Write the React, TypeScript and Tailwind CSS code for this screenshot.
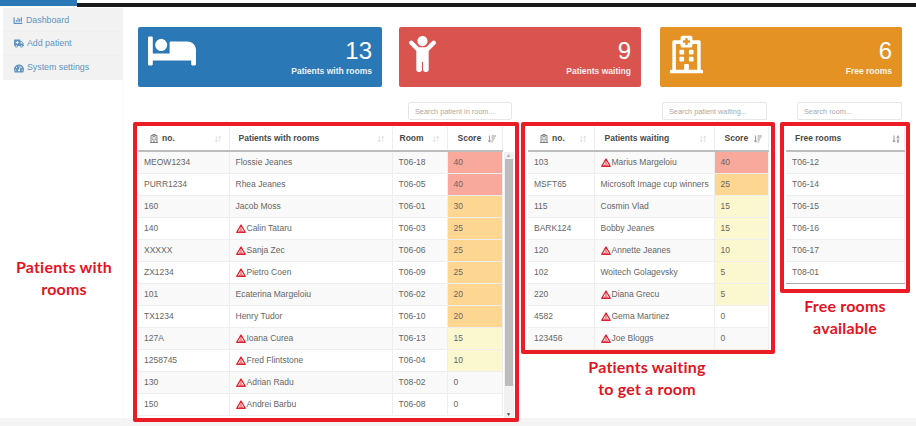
import React from "react";
import { FaBed, FaChild, FaRegHospital, FaAmbulance, FaTachometerAlt, FaSortAmountDown, FaSortAlphaDown, FaChartBar } from "react-icons/fa";
import { ArrowDownUp } from "lucide-react";

const Warn = () => (
  <svg viewBox="0 0 20 18" className="w-[10px] h-[9px] mr-px inline-block shrink-0" aria-hidden="true">
    <path d="M10 2 L18.5 16.5 H1.5 Z" fill="#fff" stroke="#e0202c" strokeWidth="2.6" strokeLinejoin="round" />
    <path d="M10 6.5 L10 12 M6.5 14 H13.5" stroke="#e0202c" strokeWidth="2" />
  </svg>
);

const Sort = () => <ArrowDownUp className="w-[8px] h-[8px] text-[#d8d8d8] shrink-0" strokeWidth={2} />;

function scoreClass(s: number) {
  if (s >= 40) return "bg-[#f9a99b]";
  if (s >= 20) return "bg-[#fdd692]";
  if (s >= 5) return "bg-[#fbf7cf]";
  return "";
}

type Row = [string, string, boolean, string, number];
const rooms: Row[] = [
  ["MEOW1234", "Flossie Jeanes", false, "T06-18", 40],
  ["PURR1234", "Rhea Jeanes", false, "T06-05", 40],
  ["160", "Jacob Moss", false, "T06-01", 30],
  ["140", "Calin Tataru", true, "T06-03", 25],
  ["XXXXX", "Sanja Zec", true, "T06-06", 25],
  ["ZX1234", "Pietro Coen", true, "T06-09", 25],
  ["101", "Ecaterina Margeloiu", false, "T06-02", 20],
  ["TX1234", "Henry Tudor", false, "T06-10", 20],
  ["127A", "Ioana Curea", true, "T06-13", 15],
  ["1258745", "Fred Flintstone", true, "T06-04", 10],
  ["130", "Adrian Radu", true, "T08-02", 0],
  ["150", "Andrei Barbu", true, "T06-08", 0],
];
const waiting: Row[] = [
  ["103", "Marius Margeloiu", true, "", 40],
  ["MSFT65", "Microsoft Image cup winners", false, "", 25],
  ["115", "Cosmin Vlad", false, "", 15],
  ["BARK124", "Bobby Jeanes", false, "", 15],
  ["120", "Annette Jeanes", true, "", 10],
  ["102", "Woitech Golagevsky", false, "", 5],
  ["220", "Diana Grecu", true, "", 5],
  ["4582", "Gema Martinez", true, "", 0],
  ["123456", "Joe Bloggs", true, "", 0],
];
const free = ["T06-12", "T06-14", "T06-15", "T06-16", "T06-17", "T08-01"];

const th = "h-6 border-r border-[#eeeeee] border-b-2 border-b-[#bdbdbd] font-bold text-[#4a4a4a] text-left p-0";
const td = "h-[22px] p-0 pl-[6px] border-r border-b border-[#eeeeee] whitespace-nowrap overflow-hidden";

function Name({ r }: { r: Row }) {
  return <span className="flex items-center">{r[2] && <Warn />}{r[1]}</span>;
}

function Head({ children, sort, className = "" }: { children: React.ReactNode; sort?: React.ReactNode; className?: string }) {
  return <div className={`flex items-center justify-between ${className}`}><span className="flex items-center gap-[4px]">{children}</span>{sort ?? <Sort />}</div>;
}

const No = () => <><FaRegHospital className="w-[8px] h-[9px] text-[#666]" /> no.</>;

function Card({ color, w, icon, n, label }: { color: string; w: string; icon: React.ReactNode; n: string; label: string }) {
  return (
    <div className={`${color} ${w} h-[60px] rounded-[2px] flex justify-between items-start pl-[10px] pr-[10px] text-white`}>
      <div className="pt-[9px]">{icon}</div>
      <div className="text-right pt-[10px]">
        <div className="text-[24px] leading-[27px]">{n}</div>
        <div className="text-[8.5px] leading-[12px] font-bold mt-[1px] opacity-90">{label}</div>
      </div>
    </div>
  );
}

function Search({ w, text, className = "" }: { w: string; text: string; className?: string }) {
  return <input readOnly placeholder={text} className={`${w} ${className} h-[18px] border border-[#e6e6e6] rounded-[2px] bg-white px-[6px] text-[7.3px] placeholder:text-[#aaaaaa] outline-none`} />;
}

const Label = ({ children, className = "" }: { children: React.ReactNode; className?: string }) => (
  <div className={`font-['Lato',sans-serif] font-bold text-[#e3141f] text-center text-[16px] leading-[22px] tracking-[0.2px] ${className}`}>{children}</div>
);

export default function App() {
  return (
    <div className="w-[916px] h-[426px] overflow-hidden bg-white font-['Liberation_Sans',sans-serif] text-[8.5px] text-[#666666] flex flex-col">
      <div className="h-[8px] shrink-0 flex items-start">
        <div className="w-[77px] h-[6px] bg-[#2b78b6]" />
        <div className="flex-1 h-[4px] mt-[3px] bg-[#1a1a1a]" />
      </div>
      <div className="flex flex-1 min-h-0">
        <div className="w-[123px] shrink-0 pl-[3px]">
          <nav className="h-[72px] bg-[#f2f2f2] text-[#5f93c0] text-[8.8px] flex flex-col">
            <div className="h-6 flex items-center gap-[3px] pl-[10px] pt-[2px] border-b border-[#efefef]"><FaChartBar className="w-[10px] h-[9px]" />Dashboard</div>
            <div className="h-6 flex items-center gap-[3px] pl-[11px] border-b border-[#efefef]"><FaAmbulance className="w-[10px] h-[9px]" />Add patient</div>
            <div className="h-6 flex items-center gap-[3px] pl-[11px]"><FaTachometerAlt className="w-[10px] h-[9px]" />System settings</div>
          </nav>
          <Label className="mt-[176px] -ml-[3px] w-[128px]">Patients with<br />rooms</Label>
        </div>
        <main className="flex-1 min-w-0 border-l border-[#fafafa]">
          <div className="flex pl-[14px] pt-[19px]">
            <Card color="bg-[#2b78b6]" w="w-[244px]" icon={<FaBed className="w-[48px] h-[42px] -mt-[6px]" />} n="13" label="Patients with rooms" />
            <Card color="bg-[#d9534f] ml-[17px]" w="w-[242px]" icon={<FaChild className="w-[27px] h-[40px] -mt-[2px]" />} n="9" label="Patients waiting" />
            <Card color="bg-[#e49223] ml-[19px]" w="w-[242px]" icon={<FaRegHospital className="w-[33px] h-[41px] -mt-[2px]" />} n="6" label="Free rooms" />
          </div>
          <div className="flex pt-[15px] pl-[284px]">
            <Search w="w-[104px]" text="Search patient in room..." />
            <Search w="w-[105px]" className="ml-[150px]" text="Search patient waiting..." />
            <Search w="w-[105px]" className="ml-[30px]" text="Search room..." />
          </div>
          <div className="flex items-start pt-[2px] pl-[9px]">
            <div className="relative z-10 w-[386px] h-[300px] border-4 border-[#ec1c24] rounded-[2px] bg-white pl-[1px] pt-[1px] flex">
              <table className="w-[364px] h-max table-fixed border-collapse">
                <colgroup><col className="w-[91px]" /><col className="w-[163px]" /><col className="w-[55px]" /><col className="w-[55px]" /></colgroup>
                <thead>
                  <tr>
                    <th className={th}><Head className="pl-[12px] pr-[7px]"><No /></Head></th>
                    <th className={th}><Head className="pl-[9px] pr-[7px]">Patients with rooms</Head></th>
                    <th className={th}><Head className="pl-[7px] pr-[7px]">Room</Head></th>
                    <th className={th}><Head className="pl-[10px] pr-[6px]" sort={<FaSortAmountDown className="w-[8px] h-[8px] text-[#999]" />}>Score</Head></th>
                  </tr>
                </thead>
                <tbody>
                  {rooms.map((r, i) => (
                    <tr key={r[0]} className={i % 2 === 0 ? "bg-[#f9f9f9]" : "bg-white"}>
                      <td className={td}>{r[0]}</td>
                      <td className={td}><Name r={r} /></td>
                      <td className={td}>{r[3]}</td>
                      <td className={`${td} ${scoreClass(r[4])}`}>{r[4]}</td>
                    </tr>
                  ))}
                </tbody>
              </table>
              <div className="ml-[1px] mt-[25px] w-[10px] h-[266px] bg-[#f1f1f1] flex flex-col items-center">
                <div className="text-[5px] leading-[7px] text-[#aaa]">▲</div>
                <div className="w-[8px] h-[227px] bg-[#bdbdbd]" />
                <div className="mt-auto text-[5px] leading-[7px] text-[#444]">▼</div>
              </div>
            </div>
            <div className="ml-[2px] w-[254px] shrink-0">
              <div className="relative z-10 h-[232px] border-4 border-[#ec1c24] rounded-[2px] bg-white pl-[3px] pt-[1px]">
                <table className="w-[240px] table-fixed border-collapse">
                  <colgroup><col className="w-[66px]" /><col className="w-[120px]" /><col className="w-[54px]" /></colgroup>
                  <thead>
                    <tr>
                      <th className={th}><Head className="pl-[12px] pr-[7px]"><No /></Head></th>
                      <th className={th}><Head className="pl-[10px] pr-[7px]">Patients waiting</Head></th>
                      <th className={th}><Head className="pl-[10px] pr-[6px]" sort={<FaSortAmountDown className="w-[8px] h-[8px] text-[#999]" />}>Score</Head></th>
                    </tr>
                  </thead>
                  <tbody>
                    {waiting.map((r, i) => (
                      <tr key={r[0]} className={i % 2 === 0 ? "bg-[#f9f9f9]" : "bg-white"}>
                        <td className={td}>{r[0]}</td>
                        <td className={td}><Name r={r} /></td>
                        <td className={`${td} ${scoreClass(r[4])}`}>{r[4]}</td>
                      </tr>
                    ))}
                  </tbody>
                </table>
              </div>
              <Label className="mt-[2px] -ml-[2px]">Patients waiting<br />to get a room</Label>
            </div>
            <div className="ml-[5px] w-[130px] shrink-0">
              <div className="relative z-10 h-[171px] border-4 border-[#ec1c24] rounded-[2px] bg-white pl-[2px] pt-[1px]">
                <table className="w-[119px] table-fixed border-collapse">
                  <thead>
                    <tr><th className={th}><Head className="pl-[9px] pr-[4px]" sort={<FaSortAlphaDown className="w-[8px] h-[8px] text-[#999]" />}>Free rooms</Head></th></tr>
                  </thead>
                  <tbody>
                    {free.map((f, i) => (
                      <tr key={f} className={i % 2 === 0 ? "bg-[#f9f9f9]" : "bg-white"}>
                        <td className={`${td} ${i === free.length - 1 ? "border-b-[#aaaaaa]" : ""}`}>{f}</td>
                      </tr>
                    ))}
                  </tbody>
                </table>
              </div>
              <Label className="mt-[2px]">Free rooms<br />available</Label>
            </div>
          </div>
        </main>
      </div>
      <div className="h-[8px] shrink-0 bg-[#f4f4f4]" />
    </div>
  );
}
